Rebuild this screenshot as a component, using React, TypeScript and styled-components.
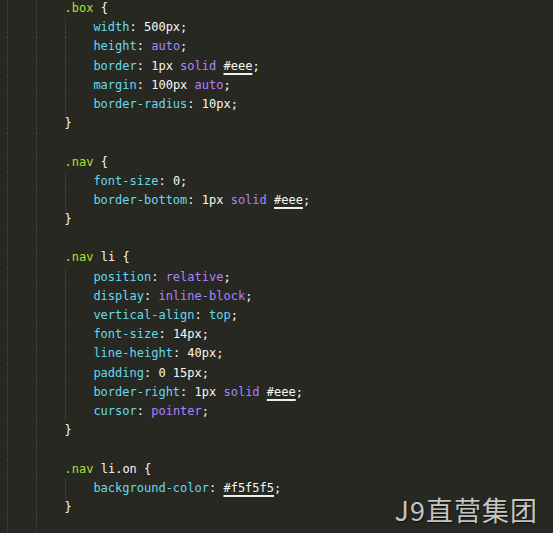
import React from "react";
import styled, { createGlobalStyle } from "styled-components";

const Global = createGlobalStyle`
  html, body { margin: 0; padding: 0; background: #272822; }
  body { width: 553px; height: 533px; overflow: hidden; }
`;

const Editor = styled.div`
  position: relative;
  width: 553px;
  height: 533px;
  overflow: hidden;
  background: #272822;
  box-sizing: border-box;
  padding-left: 7px;
  font-family: "DejaVu Sans Mono", "Liberation Mono", monospace;
  font-size: 12px;
`;

const Lines = styled.div`
  margin-top: -1px;
  display: flex;
  flex-direction: column;
`;

const Line = styled.div`
  display: flex;
  height: 19.2px;
  line-height: 19.2px;
  white-space: pre;
  color: #f8f8f2;
`;

const Indent = styled.span`
  flex: none;
  width: 28.8px;
  height: 19.2px;
  box-sizing: border-box;
  border-left: 1px dotted #4a4b44;
`;

type Kind = "sel" | "plain" | "prop" | "kw" | "cyan" | "color";

const Tok = styled.span<{ $k: Kind }>`
  color: ${({ $k }) =>
    $k === "sel"
      ? "#a6e22e"
      : $k === "prop" || $k === "cyan"
      ? "#66d9ef"
      : $k === "kw"
      ? "#ae81ff"
      : "#f8f8f2"};
  ${({ $k }) =>
    $k === "color"
      ? "text-decoration: underline; text-decoration-thickness: 2px; text-underline-offset: 3px; text-decoration-color: #f0f0ea;"
      : ""}
`;

const Watermark = styled.div`
  position: absolute;
  right: 15px;
  bottom: 7px;
  font-family: "Noto Sans CJK SC", "Noto Sans", sans-serif;
  font-size: 27px;
  line-height: 32px;
  letter-spacing: 1px;
  color: #c4c4c0;
  text-shadow: 1px 1px 1px rgba(0, 0, 0, 0.6);
`;

type T = [Kind, string];
type L = { level: number; toks: T[] };

const sel = (s: string, extra?: string): L => ({
  level: 2,
  toks: extra
    ? [["sel", s], ["plain", extra]]
    : [["sel", s], ["plain", " {"]],
});
const close: L = { level: 2, toks: [["plain", "}"]] };
const blank: L = { level: 2, toks: [] };
const prop = (name: string, vals: T[]): L => ({
  level: 3,
  toks: [["prop", name], ["plain", ": "], ...vals, ["plain", ";"]],
});

const code: L[] = [
  sel(".box"),
  prop("width", [["plain", "500px"]]),
  prop("height", [["kw", "auto"]]),
  prop("border", [["plain", "1px "], ["kw", "solid"], ["plain", " "], ["color", "#eee"]]),
  prop("margin", [["plain", "100px "], ["kw", "auto"]]),
  prop("border-radius", [["plain", "10px"]]),
  close,
  blank,
  sel(".nav"),
  prop("font-size", [["plain", "0"]]),
  prop("border-bottom", [["plain", "1px "], ["kw", "solid"], ["plain", " "], ["color", "#eee"]]),
  close,
  blank,
  sel(".nav", " li {"),
  prop("position", [["kw", "relative"]]),
  prop("display", [["kw", "inline-block"]]),
  prop("vertical-align", [["cyan", "top"]]),
  prop("font-size", [["plain", "14px"]]),
  prop("line-height", [["plain", "40px"]]),
  prop("padding", [["plain", "0 15px"]]),
  prop("border-right", [["plain", "1px "], ["kw", "solid"], ["plain", " "], ["color", "#eee"]]),
  prop("cursor", [["kw", "pointer"]]),
  close,
  blank,
  sel(".nav", " li.on {"),
  prop("background-color", [["color", "#f5f5f5"]]),
  close,
  blank,
];

export default function App() {
  return (
    <>
      <Global />
      <Editor>
        <Lines>
          {code.map((l, i) => (
            <Line key={i}>
              {Array.from({ length: l.level }).map((_, j) => (
                <Indent key={j} />
              ))}
              {l.toks.map(([k, t], j) => (
                <Tok key={j} $k={k}>
                  {t}
                </Tok>
              ))}
            </Line>
          ))}
        </Lines>
        <Watermark>J9直营集团</Watermark>
      </Editor>
    </>
  );
}
